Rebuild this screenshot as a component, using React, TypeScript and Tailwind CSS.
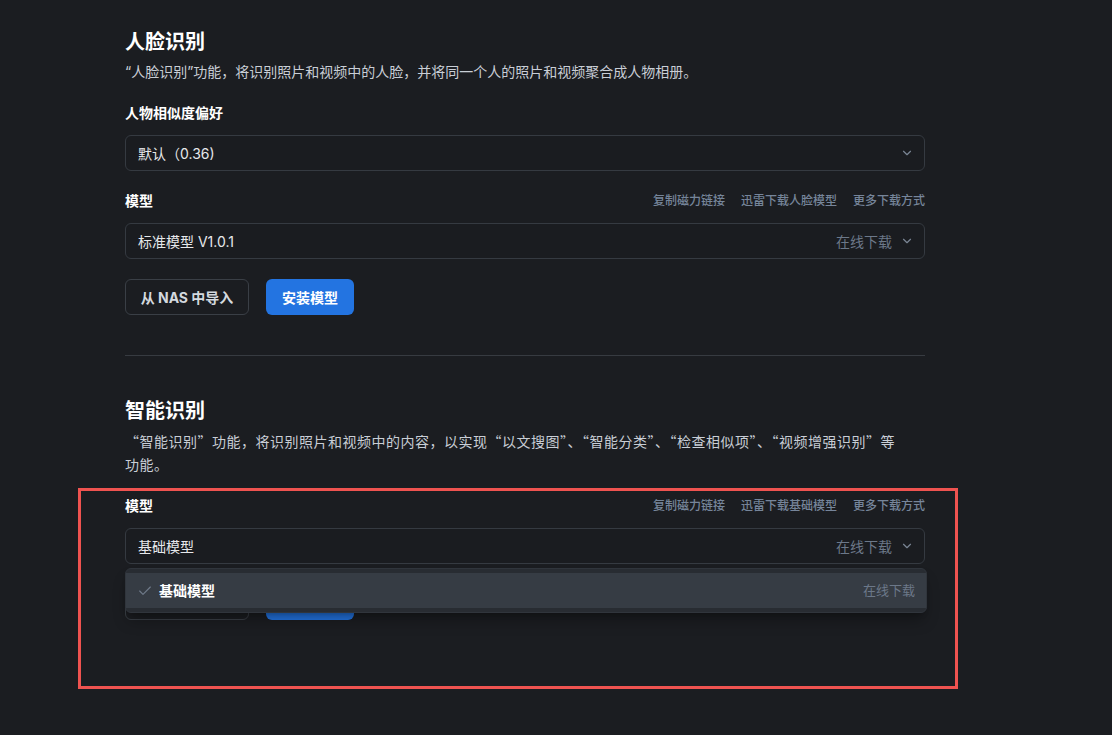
import { ChevronDown, Check } from "lucide-react";

const font = "font-['Inter','Noto_Sans_CJK_SC',sans-serif]";

function Links({ name }: { name: string }) {
    return (
        <div className="flex items-center gap-4 text-[12px] font-medium text-[#76859a]">
            <span>复制磁力链接</span>
            <span>迅雷下载{name}</span>
            <span>更多下载方式</span>
        </div>
    );
}

function Select({ value, hint }: { value: string; hint?: string }) {
    return (
        <div className="flex h-[36px] items-center justify-between rounded-md border border-[#353a41] bg-[#1a1c20] pl-[12px] pr-[10px]">
            <span className="text-[14px] text-[#e6e8eb]">{value}</span>
            <div className="flex items-center gap-[8px]">
                {hint && <span className="text-[14px] text-[#6c7889]">{hint}</span>}
                <ChevronDown className="h-[14px] w-[14px] text-[#7a8594]" strokeWidth={2} />
            </div>
        </div>
    );
}

function Buttons() {
    return (
        <div className="flex gap-[17px]">
            <button className="h-[36px] w-[124px] rounded-md border border-[#3a3f46] text-[14px] font-bold text-[#d4d9df]">
                从 NAS 中导入
            </button>
            <button className="h-[36px] w-[88px] rounded-md bg-[#2374e1] text-[14px] font-bold text-white">
                安装模型
            </button>
        </div>
    );
}

export default function App() {
    return (
        <div className={`relative min-h-screen bg-[#1b1d21] ${font}`}>
            <div className="ml-[125px] w-[800px] pt-[27px]">
                <h2 className="text-[20px] font-bold leading-[30px] text-white">人脸识别</h2>
                <p className="mt-[4px] text-[14px] leading-[22px] text-[#c9ced6]">
                    “人脸识别”功能，将识别照片和视频中的人脸，并将同一个人的照片和视频聚合成人物相册。
                </p>

                <div className="mt-[20px] text-[14px] font-bold leading-[20px] text-white">人物相似度偏好</div>
                <div className="mt-[12px]">
                    <Select value="默认（0.36)" />
                </div>

                <div className="mt-[20px] flex items-center justify-between leading-[20px]">
                    <span className="text-[14px] font-bold text-white">模型</span>
                    <Links name="人脸模型" />
                </div>
                <div className="mt-[12px]">
                    <Select value="标准模型 V1.0.1" hint="在线下载" />
                </div>

                <div className="mt-[20px]">
                    <Buttons />
                </div>

                <div className="mt-[40px] h-px bg-[#373b41]" />

                <h2 className="mt-[40px] text-[20px] font-bold leading-[30px] text-white">智能识别</h2>
                <p className="mt-[4px] font-['Noto_Sans_CJK_SC',sans-serif] text-[14px] leading-[23px] tracking-[0.5px] text-[#c9ced6]">
                    “智能识别”功能，将识别照片和视频中的内容，以实现“以文搜图”、“智能分类”、“检查相似项”、“视频增强识别”等<span className="whitespace-nowrap">功能。</span>
                </p>

                <div className="mt-[20px] flex items-center justify-between leading-[20px]">
                    <span className="text-[14px] font-bold text-white">模型</span>
                    <Links name="基础模型" />
                </div>
                <div className="relative mt-[12px]">
                    <Select value="基础模型" hint="在线下载" />
                    <div className="absolute left-0 right-[-2px] top-[40px] z-10 rounded-md border border-[#30353c] bg-[#282c32] py-[4px] shadow-lg shadow-black/30">
                        <div className="flex h-[35px] items-center justify-between bg-[#363c44] pl-[11px] pr-[11px]">
                            <div className="flex items-center gap-[6px]">
                                <Check className="h-[16px] w-[16px] text-[#6f7a89]" strokeWidth={1.75} />
                                <span className="text-[14px] font-bold text-white">基础模型</span>
                            </div>
                            <span className="text-[13px] text-[#6c7889]">在线下载</span>
                        </div>
                    </div>
                </div>
                <div className="mt-[20px] pb-[100px]">
                    <Buttons />
                </div>
            </div>

            <div className="absolute left-[78px] top-[488px] h-[201px] w-[880px] border-[3px] border-[#ef5350]" />
        </div>
    );
}
